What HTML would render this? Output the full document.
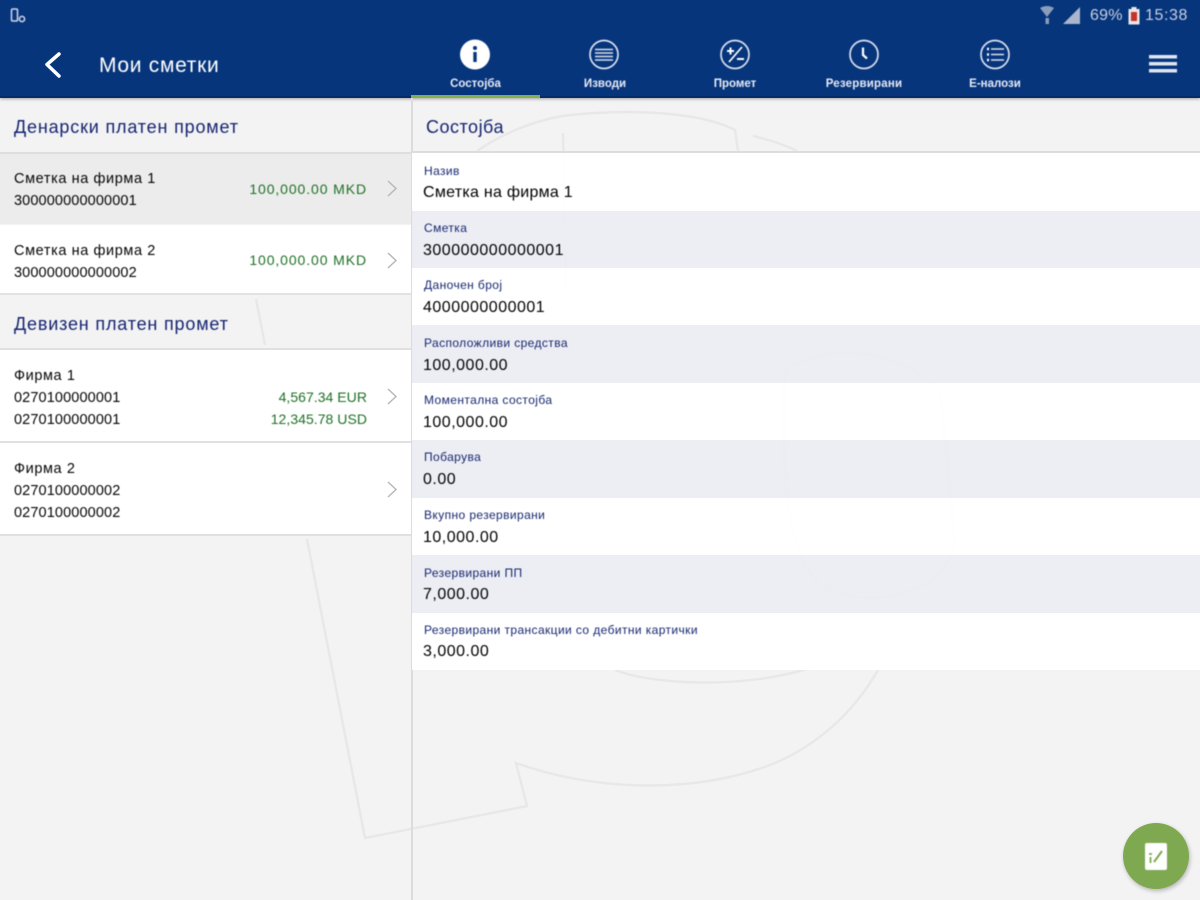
<!DOCTYPE html>
<html lang="mk"><head><meta charset="utf-8"><title>Мои сметки</title>
<style>
html,body{margin:0;padding:0;width:1200px;height:900px;overflow:hidden;background:#f3f3f4;font-family:"Liberation Sans",sans-serif}
.a{position:absolute;white-space:nowrap}
.bar{position:absolute;left:0;top:0;width:1200px;height:98px;background:#07357c;border-bottom:0;box-shadow:0 1px 3px rgba(0,0,0,.35)}
.r{position:absolute}
.t{filter:blur(.45px)}
.h{font-size:18px;color:#15246f;letter-spacing:.82px;line-height:22px}
.n{font-size:14.5px;color:#050505;letter-spacing:.6px;line-height:18px}
.d{letter-spacing:.12px}
.g{font-size:14px;color:#1f7025;line-height:18px;letter-spacing:.04px;text-align:right;right:833px}
.m{letter-spacing:.9px}
.l{font-size:12px;color:#16276f;line-height:14px;left:424px;letter-spacing:.4px}
.v{font-size:16px;color:#000;line-height:20px;left:423px;letter-spacing:.5px}
.tab{font-size:11.5px;font-weight:bold;color:#e6ebf5;line-height:14px;text-align:center;top:77px}
</style></head><body>

<svg class="a" style="left:0;top:0" width="1200" height="900" fill="none" stroke="#e8e8e9" stroke-width="2.5">
<path d="M256 299 L265 345 M307 539 L365 838 L527 806 L516 763 C590 790 690 795 770 765 C820 745 855 710 878 670"/>
<path d="M477 151 C500 135 530 122 562 116 C630 108 700 112 735 130 L738 151"/>
<path d="M563 133 L566 290 M753 136 C770 140 785 145 797 151"/>
<path d="M615 670 C650 684 740 690 810 668"/>
<path d="M785 370 C830 340 900 350 940 390 L955 540 C950 590 880 610 830 590 C790 570 780 500 785 370Z"/>
</svg>

<div class="bar"></div>
<div class="r" style="left:0;top:96px;width:1200px;height:2px;background:#052c69"></div>
<div class="r" style="left:411px;top:94.500px;width:129px;height:3.500px;background:#82b04a"></div>

<!-- status bar -->
<svg class="a t" style="left:10px;top:8px" width="18" height="16" fill="none" stroke="#cfd8e8" stroke-width="1.5"><rect x="1.5" y="1" width="6" height="12" rx="1.2"/><circle cx="12" cy="11" r="2.6"/></svg>
<svg class="a t" style="left:1038px;top:5px" width="44" height="20"><path d="M2 3 Q9-1 16 3 L9 12Z" fill="#8b9dbb"/><rect x="7.5" y="13" width="3.500" height="6" fill="#8b9dbb"/><path d="M25 19 L42 19 L42 2Z" fill="#a9b6cd"/></svg>
<div class="a t" style="left:1090px;top:6px;font-size:16px;line-height:20px;color:#c6d0e2;letter-spacing:.2px">69%</div>
<svg class="a t" style="left:1128px;top:7px" width="12" height="18"><rect x="3.500" y="0" width="5" height="2" fill="#e6e6e6"/><rect x="0.500" y="2" width="11" height="15.500" fill="#e8e8e8"/><rect x="3" y="5" width="6" height="9" fill="#c6332a"/></svg>
<div class="a t" style="left:1145px;top:6px;font-size:16px;line-height:20px;color:#c6d0e2;letter-spacing:.6px">15:38</div>

<!-- header -->
<svg class="a" style="left:42px;top:51px" width="20" height="28" fill="none" stroke="#fff" stroke-width="3.500" stroke-linecap="round" stroke-linejoin="round"><path d="M17 3 L5 13.500 L17 25"/></svg>
<div class="a t" style="left:99px;top:54px;font-size:21px;line-height:24px;color:#fff;letter-spacing:.7px">Мои сметки</div>

<!-- tab icons -->
<svg class="a t" style="left:458px;top:38px" width="34" height="34"><circle cx="17" cy="16.500" r="15" fill="#fff"/><circle cx="17" cy="10" r="2" fill="#07357c"/><rect x="15.300" y="14" width="3.400" height="10" fill="#07357c"/></svg>
<svg class="a t" style="left:587px;top:38px" width="34" height="34" fill="none" stroke="#d8e0ee" stroke-width="1.700"><circle cx="17" cy="16.500" r="14"/><path d="M8 11.500H26M8 15H26M8 18.500H26M8 22H26" stroke-width="1.500"/></svg>
<svg class="a t" style="left:718px;top:38px" width="34" height="34" fill="none" stroke="#d8e0ee" stroke-width="1.700"><circle cx="17" cy="16.500" r="14"/><path d="M11 24 L24 9" stroke="#fff"/><path d="M9 13H16M12.500 9.500V16.500M19 21H26" stroke="#fff" stroke-width="2"/></svg>
<svg class="a t" style="left:847px;top:38px" width="34" height="34" fill="none" stroke="#d8e0ee" stroke-width="1.700"><circle cx="17" cy="16.500" r="14"/><path d="M16 9.500V17L20 20.500" stroke="#fff" stroke-width="2.200"/></svg>
<svg class="a t" style="left:978px;top:38px" width="34" height="34" fill="none" stroke="#d8e0ee" stroke-width="1.700"><circle cx="17" cy="16.500" r="14"/><path d="M13 11H26M13 16.500H26M13 22H26" stroke-width="1.400"/><path d="M9 11H11M9 16.500H11M9 22H11" stroke="#fff" stroke-width="2.400"/></svg>

<div class="a tab t" style="left:411px;width:129px">Состојба</div>
<div class="a tab t" style="left:540px;width:130px">Изводи</div>
<div class="a tab t" style="left:670px;width:130px">Промет</div>
<div class="a tab t" style="left:800px;width:128px;letter-spacing:.2px">Резервирани</div>
<div class="a tab t" style="left:930px;width:130px">Е-налози</div>

<svg class="a t" style="left:1149px;top:54px" width="28" height="20" fill="#dfe5f0"><rect width="28" height="3.500" y="1"/><rect width="28" height="3.500" y="8"/><rect width="28" height="3.500" y="15"/></svg>

<!-- left rows -->
<div class="r" style="left:0;top:152px;width:411px;height:72px;background:#ececec;border-top:2px solid #dedede;box-sizing:border-box"></div>
<div class="r" style="left:0;top:225px;width:411px;height:70px;background:#fff;border-bottom:2px solid #e2e2e2;box-sizing:border-box"></div>
<div class="r" style="left:0;top:348px;width:411px;height:95px;background:#fff;border-top:2px solid #e0e0e0;border-bottom:2px solid #e0e0e0;box-sizing:border-box"></div>
<div class="r" style="left:0;top:443px;width:411px;height:93px;background:#fff;border-bottom:2px solid #e0e0e0;box-sizing:border-box"></div>

<!-- divider -->
<div class="r" style="left:411px;top:98px;width:1.500px;height:802px;background:#dcdcdd"></div>
<div class="r" style="left:412px;top:151px;width:788px;height:2px;background:#dcdcdc"></div>

<!-- right rows -->
<div class="r" style="left:412px;top:153px;width:788px;height:58px;background:rgba(255,255,255,.95)"></div>
<div class="r" style="left:412px;top:211px;width:788px;height:57px;background:rgba(236,237,243,.93)"></div>
<div class="r" style="left:412px;top:268px;width:788px;height:57px;background:rgba(255,255,255,.95)"></div>
<div class="r" style="left:412px;top:325px;width:788px;height:58px;background:rgba(236,237,243,.93)"></div>
<div class="r" style="left:412px;top:383px;width:788px;height:57px;background:rgba(255,255,255,.95)"></div>
<div class="r" style="left:412px;top:440px;width:788px;height:58px;background:rgba(236,237,243,.93)"></div>
<div class="r" style="left:412px;top:498px;width:788px;height:57px;background:rgba(255,255,255,.95)"></div>
<div class="r" style="left:412px;top:555px;width:788px;height:58px;background:rgba(236,237,243,.93)"></div>
<div class="r" style="left:412px;top:613px;width:788px;height:57px;background:rgba(255,255,255,.95)"></div>

<!-- left text -->
<div class="a h t" style="left:14px;top:116px">Денарски платен промет</div>
<div class="a h t" style="left:14px;top:313px">Девизен платен промет</div>
<div class="a h t" style="left:426px;top:116px;letter-spacing:.5px">Состојба</div>

<div class="a n t" style="left:14px;top:170px">Сметка на фирма 1</div>
<div class="a n d t" style="left:14px;top:192px">300000000000001</div>
<div class="a g m t" style="top:180px">100,000.00 MKD</div>
<div class="a n t" style="left:14px;top:242px">Сметка на фирма 2</div>
<div class="a n d t" style="left:14px;top:264px">300000000000002</div>
<div class="a g m t" style="top:251px">100,000.00 MKD</div>

<div class="a n t" style="left:14px;top:367px">Фирма 1</div>
<div class="a n d t" style="left:14px;top:389px">0270100000001</div>
<div class="a n d t" style="left:14px;top:411px">0270100000001</div>
<div class="a g t" style="top:388px">4,567.34 EUR</div>
<div class="a g t" style="top:410px">12,345.78 USD</div>
<div class="a n t" style="left:14px;top:460px">Фирма 2</div>
<div class="a n d t" style="left:14px;top:482px">0270100000002</div>
<div class="a n d t" style="left:14px;top:504px">0270100000002</div>

<svg class="a" style="left:385px;top:178px" width="14" height="330" fill="none" stroke="#b9b9b9" stroke-width="1.500"><path d="M3 3L11 10.500L3 18M3 75L11 82.500L3 90M3 211L11 218.500L3 226M3 304L11 311.500L3 319"/></svg>

<!-- right text -->
<div class="a l t" style="top:164px">Назив</div><div class="a v t" style="top:183px;letter-spacing:.27px">Сметка на фирма 1</div>
<div class="a l t" style="top:221px">Сметка</div><div class="a v t" style="top:241px">300000000000001</div>
<div class="a l t" style="top:278px">Даночен број</div><div class="a v t" style="top:298px">4000000000001</div>
<div class="a l t" style="top:336px">Расположливи средства</div><div class="a v t" style="top:356px">100,000.00</div>
<div class="a l t" style="top:393px">Моментална состојба</div><div class="a v t" style="top:413px">100,000.00</div>
<div class="a l t" style="top:450px">Побарува</div><div class="a v t" style="top:470px">0.00</div>
<div class="a l t" style="top:508px">Вкупно резервирани</div><div class="a v t" style="top:528px">10,000.00</div>
<div class="a l t" style="top:566px">Резервирани ПП</div><div class="a v t" style="top:585px">7,000.00</div>
<div class="a l t" style="top:623px">Резервирани трансакции со дебитни картички</div><div class="a v t" style="top:642px">3,000.00</div>

<!-- FAB -->
<div class="r" style="left:1123px;top:823px;width:66px;height:66px;border-radius:50%;background:#7fa950;box-shadow:1px 2px 4px rgba(0,0,0,.25)"></div>
<svg class="a t" style="left:1144px;top:842px" width="24" height="29"><rect x="1" y="1" width="22" height="27" rx="2" fill="#fff"/><path d="M10 20L18 9" stroke="#7fa950" stroke-width="2"/><path d="M5 12H8M6.500 15V21" stroke="#7fa950" stroke-width="1.800"/></svg>
</body></html>
